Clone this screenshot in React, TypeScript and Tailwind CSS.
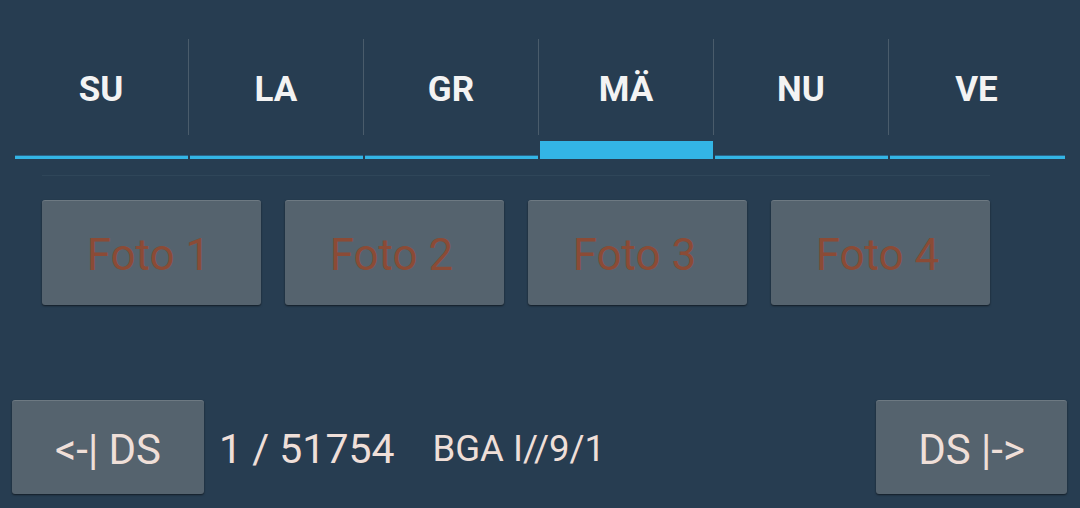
import React from "react";

const tabs = ["SU", "LA", "GR", "MÄ", "NU", "VE"];
const selected = 3;

function Tab({ label, active, last }: { label: string; active: boolean; last: boolean }) {
  return (
    <div className="w-[175px] flex flex-col">
      <div
        className={
          "h-[96px] w-[174px] flex items-center justify-center text-[35px] font-bold text-[#f3f3f3] leading-none pt-[5px] " +
          (last ? "" : "border-r border-[#4a5c6b]")
        }
      >
        <span className="mr-[1px]">{label}</span>
      </div>
      <div className="h-[6px]" />
      <div className={(last ? "w-[175px]" : "w-[173px]") + " h-[18px] flex flex-col justify-end"}>
        {active ? (
          <div className="h-[18px] bg-[#33b5e5]" />
        ) : (
          <>
            <div className="h-px bg-[#2b6488]" />
            <div className="h-[3px] bg-[#33b5e5]" />
          </>
        )}
      </div>
    </div>
  );
}

const btn =
  "bg-[#55636e] rounded-[3px] shadow-[inset_0_1px_0_rgba(255,255,255,0.14),0_1px_2px_rgba(0,0,0,0.55)] flex items-center justify-center leading-none";

export default function App() {
  return (
    <div
      className="w-[1080px] h-[508px] bg-[#273d51] overflow-hidden"
      style={{ fontFamily: "Roboto, 'Noto Sans', sans-serif" }}
    >
      <div className="flex px-[15px] pt-[39px]">
        {tabs.map((t, i) => (
          <Tab key={t} label={t} active={i === selected} last={i === tabs.length - 1} />
        ))}
      </div>
      <div className="ml-[42px] mt-[16px] h-px w-[948px] bg-[#2f4659]" />
      <div className="flex gap-[24px] pl-[42px] mt-[24px]">
        {[1, 2, 3, 4].map((n) => (
          <div key={n} className={btn + " w-[219px] h-[105px] text-[44px] text-[#8b4b36] pt-[4px]"}>
            <span className="mr-[6px]">Foto {n}</span>
          </div>
        ))}
      </div>
      <div className="flex items-center mt-[95px] pl-[12px] pr-[13px] text-[#efdfd8]">
        <div className={btn + " w-[192px] h-[94px] text-[42px] pt-[6px]"}>
          <span>&lt;-| DS</span>
        </div>
        <div className="ml-[15px] text-[41px] leading-none pt-[5px]">1 / 51754</div>
        <div className="ml-[38px] text-[36.5px] leading-none pt-[5px]">BGA I//9/1</div>
        <div className="flex-1" />
        <div className={btn + " w-[191px] h-[94px] text-[42px] pt-[6px]"}>
          <span>DS |-&gt;</span>
        </div>
      </div>
    </div>
  );
}
